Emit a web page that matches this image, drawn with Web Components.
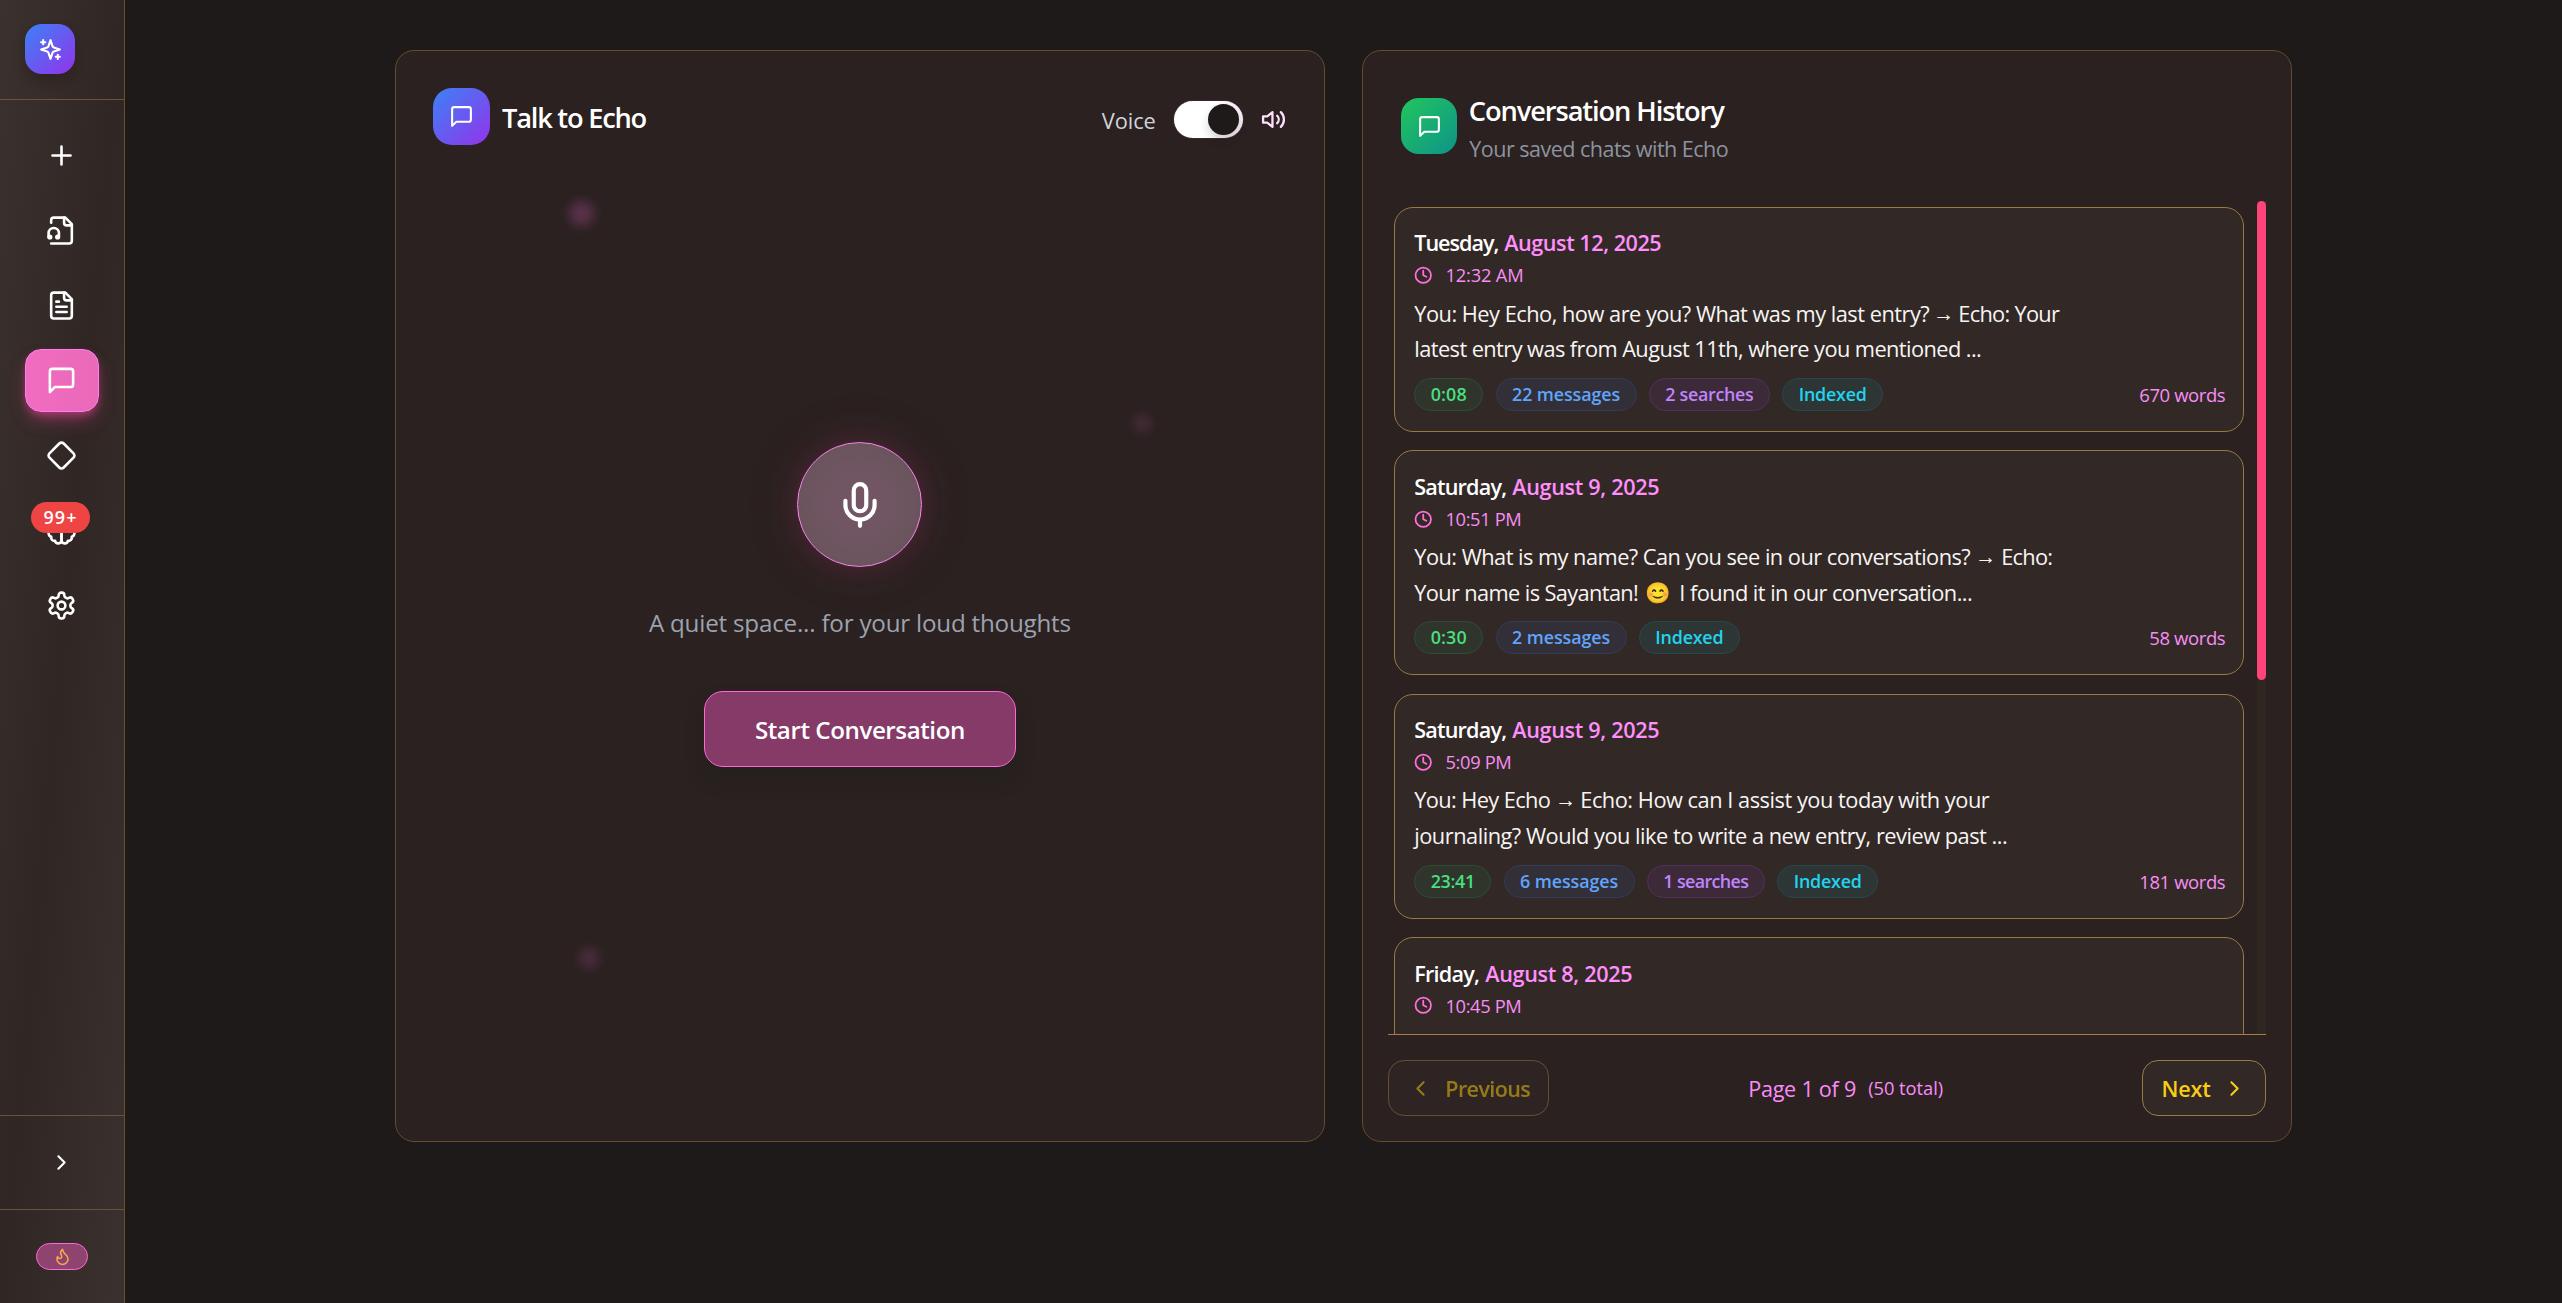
<!DOCTYPE html>
<html lang="en">
<head>
<meta charset="utf-8">
<title>Echo</title>
<style>
  html, body { margin: 0; height: 100%; }
  body {
    background: #1e1a19;
    color: #fff;
    font-family: "Open Sans", "Noto Sans", "Liberation Sans", sans-serif;
    overflow: hidden;
  }
</style>
</head>
<body>
<echo-app></echo-app>
<script>
const ICONS = {
  sparkles: '<path d="m12 3-1.912 5.813a2 2 0 0 1-1.275 1.275L3 12l5.813 1.912a2 2 0 0 1 1.275 1.275L12 21l1.912-5.813a2 2 0 0 1 1.275-1.275L21 12l-5.813-1.912a2 2 0 0 1-1.275-1.275L12 3Z"/><path d="M5 3v4M19 17v4M3 5h4M17 19h4"/>',
  plus: '<path d="M5 12h14M12 5v14"/>',
  audio: '<path d="M4 22h14a2 2 0 0 0 2-2V7l-5-5H6a2 2 0 0 0-2 2v2"/><path d="M14 2v4a2 2 0 0 0 2 2h4"/><path d="M2 17v-3a4 4 0 0 1 8 0v3"/><circle cx="9" cy="17" r="1"/><circle cx="3" cy="17" r="1"/>',
  file: '<path d="M15 2H6a2 2 0 0 0-2 2v16a2 2 0 0 0 2 2h12a2 2 0 0 0 2-2V7Z"/><path d="M14 2v4a2 2 0 0 0 2 2h4M10 9H8M16 13H8M16 17H8"/>',
  message: '<path d="M21 15a2 2 0 0 1-2 2H7l-4 4V5a2 2 0 0 1 2-2h14a2 2 0 0 1 2 2z"/>',
  diamond: '<path d="M2.7 10.3a2.41 2.41 0 0 0 0 3.41l7.59 7.59a2.41 2.41 0 0 0 3.41 0l7.59-7.59a2.41 2.41 0 0 0 0-3.41l-7.59-7.59a2.41 2.41 0 0 0-3.41 0Z"/>',
  brain: '<path d="M9.5 2A2.5 2.5 0 0 1 12 4.5v15a2.5 2.5 0 0 1-4.96.44 2.5 2.5 0 0 1-2.96-3.08 3 3 0 0 1-.34-5.58 2.5 2.5 0 0 1 1.32-4.24 2.5 2.5 0 0 1 1.98-3A2.5 2.5 0 0 1 9.5 2Z"/><path d="M14.5 2A2.5 2.5 0 0 0 12 4.5v15a2.5 2.5 0 0 0 4.96.44 2.5 2.5 0 0 0 2.96-3.08 3 3 0 0 0 .34-5.58 2.5 2.5 0 0 0-1.32-4.24 2.5 2.5 0 0 0-1.98-3A2.5 2.5 0 0 0 14.5 2Z"/>',
  settings: '<path d="M12.22 2h-.44a2 2 0 0 0-2 2v.18a2 2 0 0 1-1 1.73l-.43.25a2 2 0 0 1-2 0l-.15-.08a2 2 0 0 0-2.73.73l-.22.38a2 2 0 0 0 .73 2.73l.15.1a2 2 0 0 1 1 1.72v.51a2 2 0 0 1-1 1.74l-.15.09a2 2 0 0 0-.73 2.73l.22.38a2 2 0 0 0 2.73.73l.15-.08a2 2 0 0 1 2 0l.43.25a2 2 0 0 1 1 1.73V20a2 2 0 0 0 2 2h.44a2 2 0 0 0 2-2v-.18a2 2 0 0 1 1-1.73l.43-.25a2 2 0 0 1 2 0l.15.08a2 2 0 0 0 2.73-.73l.22-.39a2 2 0 0 0-.73-2.73l-.15-.08a2 2 0 0 1-1-1.74v-.5a2 2 0 0 1 1-1.74l.15-.09a2 2 0 0 0 .73-2.73l-.22-.38a2 2 0 0 0-2.73-.73l-.15.08a2 2 0 0 1-2 0l-.43-.25a2 2 0 0 1-1-1.73V4a2 2 0 0 0-2-2z"/><circle cx="12" cy="12" r="3"/>',
  right: '<path d="m9 18 6-6-6-6"/>',
  left: '<path d="m15 18-6-6 6-6"/>',
  flame: '<path d="M8.5 14.5A2.5 2.5 0 0 0 11 12c0-1.38-.5-2-1-3-1.072-2.143-.224-4.054 2-6 .5 2.5 2 4.9 4 6.5 2 1.6 3 3.5 3 5.5a7 7 0 1 1-14 0c0-1.153.433-2.294 1-3a2.5 2.5 0 0 0 2.5 2.5z"/>',
  volume: '<path d="M11 5 6 9H2v6h4l5 4V5zM15.54 8.46a5 5 0 0 1 0 7.07M19.07 4.93a10 10 0 0 1 0 14.14"/>',
  mic: '<rect x="9" y="2" width="6" height="13" rx="3"/><path d="M19 10v2a7 7 0 0 1-14 0v-2M12 19v3"/>',
  clock: '<circle cx="12" cy="12" r="10"/><path d="M12 6v6l4 2"/>'
};

class UiIcon extends HTMLElement {
  connectedCallback() {
    if (this.shadowRoot) return;
    const s = this.getAttribute('size') || 24;
    const stroke = this.getAttribute('stroke') || 2;
    this.attachShadow({ mode: 'open' }).innerHTML = `
      <style>:host{display:block;flex:none;width:${s}px;height:${s}px}svg{display:block;width:100%;height:100%;overflow:visible}</style>
      <svg viewBox="0 0 24 24" fill="none" stroke="currentColor" stroke-width="${stroke}" stroke-linecap="round" stroke-linejoin="round">${ICONS[this.getAttribute('name')]}</svg>`;
  }
}
customElements.define('ui-icon', UiIcon);

/* A run of text tracked so that it fills exactly the width in its "w" attribute. */
class FitText extends HTMLElement {
  connectedCallback() {
    if (this.shadowRoot) return;
    this.attachShadow({ mode: 'open' }).innerHTML =
      '<style>:host{display:inline-block;flex:none;white-space:pre}</style><slot></slot>';
    const w = parseFloat(this.getAttribute('w'));
    if (!w) return;
    const natural = this.getBoundingClientRect().width;
    this.style.letterSpacing = ((w - natural) / [...this.textContent].length).toFixed(3) + 'px';
    this.style.width = w + 'px';
  }
}
customElements.define('fit-text', FitText);

class NavItem extends HTMLElement {
  connectedCallback() {
    if (this.shadowRoot) return;
    this.attachShadow({ mode: 'open' }).innerHTML = `
      <style>
        :host{display:flex;position:relative;box-sizing:border-box;width:74px;height:62.5px;align-items:center;justify-content:center;
          border:1px solid transparent;border-radius:16px;color:#fff;padding-right:1px}
        :host([active]){background:linear-gradient(90deg,#f06cc0,#ea69b8);border-color:#ff7cf2;
          box-shadow:0 10px 19px -4px rgba(236,72,153,.45),0 4px 8px -2px rgba(236,72,153,.5)}
      </style><ui-icon name="${this.getAttribute('icon')}" size="31"></ui-icon><slot></slot>`;
  }
}
customElements.define('nav-item', NavItem);

class SideBar extends HTMLElement {
  connectedCallback() {
    if (this.shadowRoot) return;
    this.attachShadow({ mode: 'open' }).innerHTML = `
      <style>
        :host{display:flex;flex-direction:column;flex:none;box-sizing:border-box;width:125px;height:1303px;
          border-right:1px solid #69502f;background:linear-gradient(to bottom right,#3b312e,#302624 50%,#3b312e)}
        .top{box-sizing:border-box;height:100px;padding:24px 25px;border-bottom:1px solid #69543a}
        .logo{width:50px;height:50px;border-radius:17px;display:flex;align-items:center;justify-content:center;
          background:linear-gradient(135deg,#3b82f6,#9333ea);box-shadow:0 6px 12px rgba(20,10,10,.25)}
        nav{flex:1;display:flex;flex-direction:column;gap:12.5px;padding:24px 25px 0}
        .badge{position:absolute;left:5px;top:2px;width:59px;height:31px;border-radius:16px;background:#ef4444;
          font-size:18px;font-weight:650;line-height:31px;text-align:center}
        .toggle,.streak{box-sizing:border-box;border-top:1px solid #69543a;display:flex;justify-content:center;padding-right:1px}
        .toggle{height:94px;padding-top:34px}
        .streak{height:94px;padding:33px 0 0}
        .pill{box-sizing:border-box;width:52px;height:27px;border:1px solid #ff66d8;border-radius:14px;background:#8f4470;
          color:#f2a654;display:flex;align-items:center;justify-content:center}
      </style>
      <div class="top"><div class="logo"><ui-icon name="sparkles" size="25"></ui-icon></div></div>
      <nav>
        <nav-item icon="plus"></nav-item>
        <nav-item icon="audio"></nav-item>
        <nav-item icon="file"></nav-item>
        <nav-item icon="message" active></nav-item>
        <nav-item icon="diamond"></nav-item>
        <nav-item icon="brain"><span class="badge"><fit-text w="34">99+</fit-text></span></nav-item>
        <nav-item icon="settings"></nav-item>
      </nav>
      <div class="toggle"><ui-icon name="right" size="25"></ui-icon></div>
      <div class="streak"><div class="pill"><ui-icon name="flame" size="19"></ui-icon></div></div>`;
  }
}
customElements.define('side-bar', SideBar);

class UiPanel extends HTMLElement {
  connectedCallback() {
    if (this.shadowRoot) return;
    this.attachShadow({ mode: 'open' }).innerHTML = `
      <style>:host{display:flex;flex-direction:column;flex:1 1 0;min-width:0;box-sizing:border-box;height:1092px;
        border:1px solid #634c2c;border-radius:19px;background:#2a2120;position:relative;overflow:hidden}</style><slot></slot>`;
  }
}
customElements.define('ui-panel', UiPanel);

class TalkPanel extends HTMLElement {
  connectedCallback() {
    if (this.shadowRoot) return;
    this.attachShadow({ mode: 'open' }).innerHTML = `
      <style>
        :host{display:flex;flex:1 1 0;min-width:0}
        header{display:flex;align-items:flex-start;padding:37px 37.5px 0 37px;height:57px}
        .tile{width:57px;height:57px;border-radius:19px;display:flex;align-items:center;justify-content:center;
          background:linear-gradient(135deg,#3b82f6,#9333ea)}
        .title{margin:1px 0 0 12px;font-size:27.3px;line-height:57px;font-weight:640}
        .voice{margin:6.5px 0 0 auto;display:flex;align-items:center;height:50px}
        .label{font-size:21.8px;font-weight:500;line-height:36px;padding-top:2px;color:#d1d5db;margin-right:18.5px}
        .switch{box-sizing:border-box;width:69px;height:37px;border-radius:19px;background:linear-gradient(90deg,#fff 55%,#f3eef2);
          padding:3px 4px 3px 0;display:flex;justify-content:flex-end;margin-right:18px;box-shadow:0 0 1px #f472d0}
        .knob{width:31px;height:31px;border-radius:50%;background:#1e1a19;box-shadow:0 6px 10px rgba(30,26,25,.18)}
        ui-icon[name=volume]{color:#ffe0fc}
        .body{display:flex;flex-direction:column;align-items:center;padding-top:297px}
        .mic{box-sizing:border-box;width:125px;height:125px;border-radius:50%;border:1.5px solid #ff80ee;display:flex;
          align-items:center;justify-content:center;background:radial-gradient(circle,#755566 0,#6f5561 45%,#645457 100%);
          box-shadow:0 0 25px rgba(236,72,153,.12),0 0 62px rgba(236,72,153,.11)}
        .tag{margin-top:37.2px;height:38px;line-height:38px;font-size:24.2px;color:#9ca3af}
        button{all:unset;box-sizing:border-box;margin-top:49.3px;width:312px;height:76px;border-radius:19px;border:1px solid #ff66d8;
          background:#853a68;font-size:24.2px;font-weight:640;line-height:75px;text-align:center;
          box-shadow:0 12px 19px -4px rgba(30,32,26,.6)}
        .spark{position:absolute;border-radius:50%;background:#b4509a;filter:blur(6px)}
      </style>
      <ui-panel>
        <header>
          <div class="tile"><ui-icon name="message" size="25"></ui-icon></div>
          <fit-text class="title" w="144">Talk to Echo</fit-text>
          <div class="voice">
            <fit-text class="label" w="54">Voice</fit-text>
            <div class="switch"><div class="knob"></div></div>
            <ui-icon name="volume" size="25" stroke="2.2"></ui-icon>
          </div>
        </header>
        <div class="body">
          <div class="mic"><ui-icon name="mic" size="50"></ui-icon></div>
          <fit-text class="tag" w="422">A quiet space... for your loud thoughts</fit-text>
          <button><fit-text w="210">Start Conversation</fit-text></button>
        </div>
        <div class="spark" style="left:173px;top:150px;width:25px;height:25px;opacity:.36"></div>
        <div class="spark" style="left:738px;top:364px;width:17px;height:17px;opacity:.24"></div>
        <div class="spark" style="left:183px;top:897px;width:20px;height:20px;opacity:.26"></div>
      </ui-panel>`;
  }
}
customElements.define('talk-panel', TalkPanel);

class StatChip extends HTMLElement {
  connectedCallback() {
    if (this.shadowRoot) return;
    const tones = {
      green: ['#2f352a', '#2c4d33', '#4ade80'], blue: ['#322f39', '#333b55', '#60a5fa'],
      purple: ['#3d2a38', '#533059', '#c084fc'], cyan: ['#2d3535', '#26494e', '#22d3ee']
    };
    const [bg, line, ink] = tones[this.getAttribute('tone')];
    const w = +this.getAttribute('width');
    this.attachShadow({ mode: 'open' }).innerHTML = `
      <style>:host{display:block;box-sizing:border-box;width:${w}px;height:33px;border-radius:17px;border:1px solid ${line};
        background:${bg};color:${ink};font-size:17.9px;font-weight:650;line-height:31.5px;text-align:center}</style>
      <fit-text w="${w - 33}">${this.textContent}</fit-text>`;
  }
}
customElements.define('stat-chip', StatChip);

class ChatCard extends HTMLElement {
  set data(d) {
    const run = ([text, w, cls]) => cls === 'gap' ? `<i style="width:${w}px"></i>` : `<fit-text class="${cls || ''}" w="${w}">${text}</fit-text>`;
    this.attachShadow({ mode: 'open' }).innerHTML = `
      <style>
        :host{display:block;flex:none;box-sizing:border-box;height:225px;width:850px;border:1px solid #997a42;border-radius:19px;
          background:#322826;padding:20.4px 18px 0 19px}
        .date{display:flex;height:30px;line-height:30px;font-size:21.6px;font-weight:640;gap:6px}
        .date fit-text+fit-text{color:#ff8ffb}
        .time{display:flex;align-items:center;height:24px;line-height:24px;margin:5px 0 8.2px;font-size:18.3px;color:#f78ef4}
        .time ui-icon{margin-right:12.7px;color:#ff6fdc}
        .line{display:flex;height:35.8px;line-height:35.8px;font-size:21.8px;color:#f7f5f4}
        .line i{flex:none}
        .arrow{font-family:"Noto Sans","Liberation Sans",sans-serif;font-size:21px}
        .emoji{font-size:20.5px}
        .meta{display:flex;align-items:center;gap:12.3px;margin-top:10.8px}
        .words{margin-left:auto;color:#f78ef4;font-size:18.5px;line-height:31px}
      </style>
      <div class="date"><fit-text w="${d.day[1]}">${d.day[0]}</fit-text><fit-text w="${d.date[1]}">${d.date[0]}</fit-text></div>
      <div class="time"><ui-icon name="clock" size="18.5" stroke="2.3"></ui-icon><fit-text w="${d.time[1]}">${d.time[0]}</fit-text></div>
      ${d.lines.map(l => `<div class="line">${l.map(run).join('')}</div>`).join('')}
      <div class="meta">${d.chips.map(([t, w, tone]) => `<stat-chip tone="${tone}" width="${w}">${t}</stat-chip>`).join('')}
        ${d.words ? `<fit-text class="words" w="${d.words[1]}">${d.words[0]}</fit-text>` : ''}</div>`;
  }
}
customElements.define('chat-card', ChatCard);

const CHATS = [
  { day: ['Tuesday,', 84], date: ['August 12, 2025', 157], time: ['12:32 AM', 78],
    lines: [[['You: Hey Echo, how are you? What was my last entry?', 515], ['', 4, 'gap'], ['→', 20, 'arrow'], ['', 5, 'gap'], ['Echo: Your', 101]],
            [['latest entry was from August 11th, where you mentioned ...', 567]]],
    chips: [['0:08', 69, 'green'], ['22 messages', 141, 'blue'], ['2 searches', 121, 'purple'], ['Indexed', 101, 'cyan']],
    words: ['670 words', 86] },
  { day: ['Saturday,', 92], date: ['August 9, 2025', 147], time: ['10:51 PM', 76],
    lines: [[['You: What is my name? Can you see in our conversations?', 556], ['', 5, 'gap'], ['→', 20, 'arrow'], ['', 6, 'gap'], ['Echo:', 51]],
            [['Your name is Sayantan!', 224], ['', 7, 'gap'], ['😊', 26, 'emoji'], ['', 8, 'gap'], ['I found it in our conversation...', 293]]],
    chips: [['0:30', 69, 'green'], ['2 messages', 131, 'blue'], ['Indexed', 101, 'cyan']],
    words: ['58 words', 76] },
  { day: ['Saturday,', 92], date: ['August 9, 2025', 147], time: ['5:09 PM', 66],
    lines: [[['You: Hey Echo', 136], ['', 5, 'gap'], ['→', 20, 'arrow'], ['', 5, 'gap'], ['Echo: How can I assist you today with your', 409]],
            [['journaling? Would you like to write a new entry, review past ...', 593]]],
    chips: [['23:41', 77, 'green'], ['6 messages', 131, 'blue'], ['1 searches', 118, 'purple'], ['Indexed', 101, 'cyan']],
    words: ['181 words', 86] },
  { day: ['Friday,', 65], date: ['August 8, 2025', 147], time: ['10:45 PM', 76], lines: [], chips: [] }
];

class HistoryPanel extends HTMLElement {
  connectedCallback() {
    if (this.shadowRoot) return;
    const root = this.attachShadow({ mode: 'open' });
    root.innerHTML = `
      <style>
        :host{display:flex;flex:1 1 0;min-width:0}
        header{box-sizing:border-box;display:flex;height:150px;padding:41px 38px 0;flex:none}
        .tile{width:56px;height:56px;margin-top:6px;border-radius:18px;display:flex;align-items:center;justify-content:center;
          background:linear-gradient(135deg,#22c55e,#0d9488)}
        .text{margin-left:11.5px;display:flex;flex-direction:column}
        .title{font-size:27.3px;font-weight:640;line-height:38px}
        .sub{font-size:21.6px;line-height:30px;margin:4px 0 0 .5px;color:#8d939f}
        .scroll{display:flex;height:833px;margin:0 25px;overflow:hidden;flex:none}
        .list{display:flex;flex-direction:column;gap:18.4px;padding:6px 13px 0 6px}
        .track{width:9px;height:833px;background:#302723}
        .thumb{width:9px;height:479px;border-radius:5px;background:#ff4479}
        footer{margin:0 25px;border-top:1px solid #a67e43;padding-top:25px;display:flex;justify-content:space-between}
        .btn{box-sizing:border-box;height:56px;border:1px solid #997a42;border-radius:16px;background:#322826;color:#facc15;display:flex;
          align-items:center;font-size:21.6px;font-weight:640;line-height:30px}
        .btn fit-text{padding-top:2px}
        .prev{width:161px;padding-left:19px;gap:12px;opacity:.52}
        .next{width:124px;padding-left:18.5px;gap:11px}
        .page{display:flex;align-items:center;gap:12px;font-size:21.6px;line-height:30px;color:#fb8cf8}
        .page fit-text+fit-text{font-size:18.3px}
        .page fit-text:first-child{padding-top:2px}
      </style>
      <ui-panel>
        <header>
          <div class="tile"><ui-icon name="message" size="25"></ui-icon></div>
          <div class="text"><fit-text class="title" w="255">Conversation History</fit-text>
          <fit-text class="sub" w="259">Your saved chats with Echo</fit-text></div>
        </header>
        <div class="scroll"><div class="list"></div><div class="track"><div class="thumb"></div></div></div>
        <footer>
          <div class="btn prev"><ui-icon name="left" size="25"></ui-icon><fit-text w="85">Previous</fit-text></div>
          <div class="page"><fit-text w="108">Page 1 of 9</fit-text><fit-text w="75">(50 total)</fit-text></div>
          <div class="btn next"><fit-text w="49">Next</fit-text><ui-icon name="right" size="25"></ui-icon></div>
        </footer>
      </ui-panel>`;
    const list = root.querySelector('.list');
    for (const chat of CHATS) {
      const card = document.createElement('chat-card');
      card.data = chat;
      list.append(card);
    }
  }
}
customElements.define('history-panel', HistoryPanel);

class EchoApp extends HTMLElement {
  connectedCallback() {
    this.attachShadow({ mode: 'open' }).innerHTML = `
      <style>:host{display:flex;width:2562px;height:1303px}
        main{flex:1;display:flex;gap:37.5px;padding:50px 270px 0;min-width:0}</style>
      <side-bar></side-bar>
      <main><talk-panel></talk-panel><history-panel></history-panel></main>`;
  }
}
customElements.define('echo-app', EchoApp);
</script>
</body>
</html>
